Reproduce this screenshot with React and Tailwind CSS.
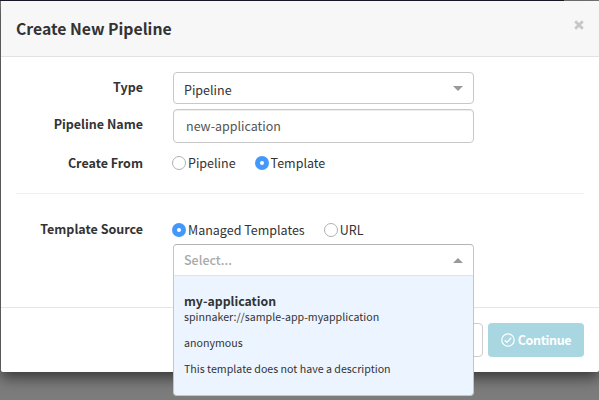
function Radio({ checked, label }) {
  return (
    <label className="flex items-center gap-0.5">
      {checked ? (
        <span className="flex size-3.5 items-center justify-center rounded-full bg-[#4598fb]">
          <span className="size-1 rounded-full bg-white" />
        </span>
      ) : (
        <span className="size-3.5 rounded-full border border-[#b0b0b0] bg-white" />
      )}
      <span className="whitespace-nowrap">{label}</span>
    </label>
  );
}

function Row({ label, className, labelClass = "", children }) {
  return (
    <div className={`flex items-center ${className}`}>
      <div className={`w-[142px] shrink-0 text-right font-bold ${labelClass}`}>{label}</div>
      {children}
    </div>
  );
}

function Caret({ up }) {
  return up ? (
    <span className="border-x-5 border-b-5 border-x-transparent border-b-[#999]" />
  ) : (
    <span className="border-x-5 border-t-5 border-x-transparent border-t-[#999]" />
  );
}

export default function App() {
  return (
    <div className="h-[400px] w-[599px] overflow-hidden bg-[#7c7c7c] pl-px font-['Noto_Sans_CJK_SC',sans-serif] text-[12.5px] leading-5 text-[#333]">
      <div className="-ml-px h-px w-[564px] bg-[#1a1b29]" />
      <div className="relative h-[371px] w-[598px] rounded-b-[2px] bg-white shadow-[0_5px_15px_rgba(0,0,0,0.6)]">
        <header className="flex h-14 items-center justify-between border-b border-[#e2e2e2] bg-[#f7f7f7] px-[15px]">
          <h1 className="text-[15.75px] font-bold">Create New Pipeline</h1>
          <svg className="mb-[7px] size-[10px]" viewBox="0 0 10 10" stroke="#c6c6c6" strokeWidth="2.7">
            <path d="M1.2 1.2 8.8 8.8M8.8 1.2 1.2 8.8" />
          </svg>
        </header>
        <main className="h-[251px] border-b border-[#e5e5e5] px-[15px] pt-[15px]">
          <div className="-ml-[15px]">
            <Row label="Type" className="h-8" labelClass="mb-[2px]">
              <div className="ml-[30px] flex h-8 w-[301px] items-center justify-between rounded border border-[#c8c8c8] px-[10px] pt-px">
                <span className="mt-[3px]">Pipeline</span>
                <Caret />
              </div>
            </Row>
            <Row label="Pipeline Name" className="mt-[5px] h-[34px]" labelClass="mb-1">
              <div className="ml-[30px] flex h-[34px] w-[301px] items-center rounded border border-[#c8c8c8] pl-3 text-[#555] shadow-[inset_0_1px_1px_rgba(0,0,0,0.075)]">
                new-application
              </div>
            </Row>
            <Row label="Create From" className="mt-[10px] h-5">
              <div className="ml-[29px] flex gap-[19px]">
                <Radio label="Pipeline" />
                <Radio checked label="Template" />
              </div>
            </Row>
          </div>
          <hr className="mt-5 border-[#eee]" />
          <div className="-ml-[15px]">
            <Row label="Template Source" className="mt-[26px] h-5" labelClass="mb-[2px]">
              <div className="ml-[29px] flex gap-[19px]">
                <Radio checked label="Managed Templates" />
                <Radio label="URL" />
              </div>
            </Row>
          </div>
        </main>
        <footer className="flex h-16 items-center justify-end gap-[5px] pr-[15px]">
          <button className="h-[34px] w-[66px] rounded border border-[#ccc] bg-white">Cancel</button>
          <button className="flex h-[34px] w-24 items-center justify-center gap-[3px] rounded bg-[#a8d7e1] font-bold text-white">
            <svg className="size-[14px]" viewBox="0 0 14 14" fill="none" stroke="currentColor">
              <circle cx="7" cy="7" r="6.2" strokeWidth="1.2" />
              <path d="m3.7 7.2 2.2 2.2 4.3-4.7" strokeWidth="1.3" />
            </svg>
            <span className="text-[12.5px] tracking-[-0.35px]">Continue</span>
          </button>
        </footer>
        <div className="absolute top-[243px] left-[172px] h-[152px] w-[301px] rounded border border-[#c5c5c5] border-t-[#b3b3b3] bg-[#ecf5ff]">
          <div className="flex h-[31px] items-center justify-between rounded-t border-b border-[#e2e2e2] bg-white px-[10px]">
            <span className="font-medium text-[#aaa]">Select...</span>
            <Caret up />
          </div>
          <div className="px-[10px] pt-4 text-[10.65px] leading-[17px]">
            <p className="text-[12.3px] leading-[18px] font-bold">my-application</p>
            <p className="-mt-[2px]">spinnaker://sample-app-myapplication</p>
            <p className="mt-[9px]">anonymous</p>
            <p className="mt-[9px]">This template does not have a description</p>
          </div>
        </div>
      </div>
    </div>
  );
}
